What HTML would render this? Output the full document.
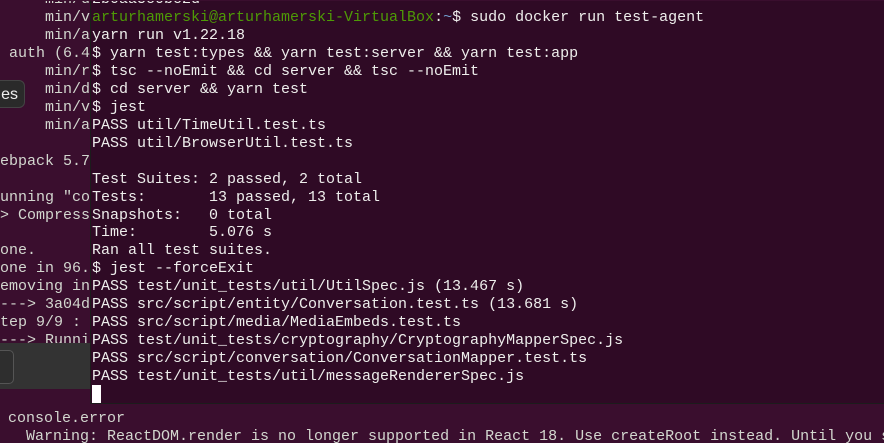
<!DOCTYPE html>
<html><head><meta charset="utf-8">
<style>
html,body{margin:0;padding:0;}
body{width:884px;height:442px;overflow:hidden;background:#3a0e2e;position:relative;font-family:"Liberation Mono","DejaVu Sans Mono",monospace;font-size:15px;}
#wrap{position:absolute;left:0;top:1px;width:884px;height:442px;overflow:hidden;}
.l{position:absolute;white-space:pre;line-height:18px;}
.b{color:#d3d7cf;right:794px;}
.f{color:#eeeeec;left:92px;}
#front{position:absolute;left:90px;top:-3px;width:800px;height:405px;background:#2f0a25;border-left:1px solid #1c1c1c;border-bottom:1px solid #1c1c1c;}
.g{color:#4e9a06}.bl{color:#729fcf}
#panel{position:absolute;left:0;top:342px;width:90px;height:46px;background:#333;}
#btn{position:absolute;left:-6px;top:349px;width:18px;height:32px;border:1px solid #555;border-radius:5px;background:#2e2e2e;}
#les{position:absolute;left:-8px;top:79px;width:33px;height:28px;background:#2a2a2a;border:1px solid #444;border-radius:6px;color:#eee;font-family:"Liberation Sans",sans-serif;font-size:16px;line-height:28px;text-align:right;padding-right:6px;box-sizing:border-box;}
#cur{position:absolute;left:92px;top:384px;width:9px;height:18px;background:#fff;}
</style></head><body><div id="wrap">
<div class="l b" style="top:-10px">min/d</div>
<div class="l b" style="top:8px">min/v</div>
<div class="l b" style="top:26px">min/a</div>
<div class="l b" style="top:44px">auth (6.4</div>
<div class="l b" style="top:62px">min/r</div>
<div class="l b" style="top:80px">min/d</div>
<div class="l b" style="top:98px">min/v</div>
<div class="l b" style="top:116px">min/a</div>
<div class="l b" style="top:152px">ebpack 5.7</div>
<div class="l b" style="top:188px">unning "co</div>
<div class="l b" style="top:206px">&gt; Compress</div>
<div class="l" style="top:241px;left:0;color:#d3d7cf">one.</div>
<div class="l b" style="top:259px">one in 96.</div>
<div class="l b" style="top:277px">emoving in</div>
<div class="l b" style="top:295px">---&gt; 3a04d</div>
<div class="l b" style="top:313px">tep 9/9 : </div>
<div class="l b" style="top:331px">---&gt; Runni</div>
<div id="les">les</div>
<div id="panel"></div>
<div id="btn"></div>
<div id="front"></div>
<div class="l f" style="top:-10px">2b0aa5c0bc2d</div>
<div class="l f" style="top:8px"><span class="g">arturhamerski@arturhamerski-VirtualBox</span>:<span class="bl">~</span>$ sudo docker run test-agent</div>
<div class="l f" style="top:26px">yarn run v1.22.18</div>
<div class="l f" style="top:44px">$ yarn test:types &amp;&amp; yarn test:server &amp;&amp; yarn test:app</div>
<div class="l f" style="top:62px">$ tsc --noEmit &amp;&amp; cd server &amp;&amp; tsc --noEmit</div>
<div class="l f" style="top:80px">$ cd server &amp;&amp; yarn test</div>
<div class="l f" style="top:98px">$ jest</div>
<div class="l f" style="top:116px">PASS util/TimeUtil.test.ts</div>
<div class="l f" style="top:134px">PASS util/BrowserUtil.test.ts</div>
<div class="l f" style="top:170px">Test Suites: 2 passed, 2 total</div>
<div class="l f" style="top:188px">Tests:       13 passed, 13 total</div>
<div class="l f" style="top:206px">Snapshots:   0 total</div>
<div class="l f" style="top:223px">Time:        5.076 s</div>
<div class="l f" style="top:241px">Ran all test suites.</div>
<div class="l f" style="top:259px">$ jest --forceExit</div>
<div class="l f" style="top:277px">PASS test/unit_tests/util/UtilSpec.js (13.467 s)</div>
<div class="l f" style="top:295px">PASS src/script/entity/Conversation.test.ts (13.681 s)</div>
<div class="l f" style="top:313px">PASS src/script/media/MediaEmbeds.test.ts</div>
<div class="l f" style="top:331px">PASS test/unit_tests/cryptography/CryptographyMapperSpec.js</div>
<div class="l f" style="top:349px">PASS src/script/conversation/ConversationMapper.test.ts</div>
<div class="l f" style="top:367px">PASS test/unit_tests/util/messageRendererSpec.js</div>
<div id="cur"></div>
<div class="l" style="top:409px;left:8px;color:#d3d7cf">console.error</div>
<div class="l" style="top:427px;left:26px;color:#d3d7cf">Warning: ReactDOM.render is no longer supported in React 18. Use createRoot instead. Until you s</div>
</div></body></html>
